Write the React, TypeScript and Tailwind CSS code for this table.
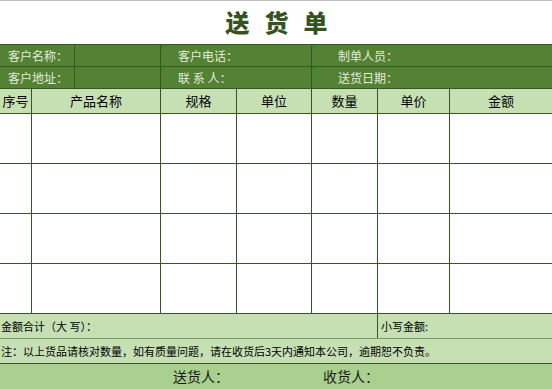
import React from "react";

const F = { fontFamily: '"Noto Sans CJK SC", "Noto Sans", sans-serif' };
const cols = [32, 129, 76, 75, 66, 72, 102];
const heads = ["序号", "产品名称", "规格", "单位", "数量", "单价", "金额"];

function Tri() {
  return (
    <div className="absolute left-0 top-0 w-0 h-0 border-t-[5px] border-r-[5px] border-t-[#2f8a2f] border-r-transparent" />
  );
}

function InfoRow({ a, b, c }: { a: string; b: string; c: string }) {
  return (
    <div className="flex h-[22px] border-b border-[#375623] bg-[#548235] text-[12px] text-[#e3ebdc] leading-[21px]">
      <div className="w-[75px] pl-[8px] border-r border-[#375623]">{a}</div>
      <div className="w-[86px] border-r border-[#375623]" />
      <div className="relative w-[151px] pl-[17px] border-r border-[#375623]">
        <Tri />
        {b}
      </div>
      <div className="relative flex-1 pl-[26px]">
        <Tri />
        {c}
      </div>
    </div>
  );
}

export default function App() {
  return (
    <div className="w-[552px] h-[389px] bg-white overflow-hidden text-black" style={F}>
      <div className="h-[45px] border-t border-[#bdbdbd] border-b border-b-[#375623] flex items-center justify-center">
        <div className="text-[24px] font-black text-[#36521f] tracking-[15px] pl-[16px] leading-none mt-[-2px]">送货单</div>
      </div>
      <InfoRow a="客户名称：" b="客户电话：" c="制单人员：" />
      <InfoRow a="客户地址：" b="联 系 人：" c="送货日期：" />
      <div className="flex h-[25px] bg-[#c6e0b4] border-b border-[#375623] text-[13px] leading-[24px]">
        {heads.map((h, i) => (
          <div
            key={h}
            style={{ width: cols[i] }}
            className={`text-center ${i < 6 ? "border-r border-[#375623]" : ""}`}
          >
            {h}
          </div>
        ))}
      </div>
      {[0, 1, 2, 3].map((r) => (
        <div key={r} className="flex h-[50px] border-b border-[#375623]">
          {cols.map((w, i) => (
            <div key={i} style={{ width: w }} className={i < 6 ? "border-r border-[#375623]" : ""} />
          ))}
        </div>
      ))}
      <div className="flex h-[25px] bg-[#c6e0b4] border-b border-[#7a9a63] text-[11px] leading-[24px]">
        <div className="w-[378px] pl-[1px] border-r border-[#375623]">金额合计（大 写）：</div>
        <div className="flex-1 pl-[3px]">小写金额:</div>
      </div>
      <div className="h-[25px] bg-[#c6e0b4] border-b border-[#375623] text-[11px] leading-[24px] pl-[1px]">
        注：以上货品请核对数量，如有质量问题，请在收货后3天内通知本公司，逾期恕不负责。
      </div>
      <div className="flex h-[25px] bg-[#a9d08e] text-[14px] leading-[25px] text-[#1a1a1a]">
        <div className="pl-[173px] w-[323px]">送货人：</div>
        <div>收货人：</div>
      </div>
    </div>
  );
}
